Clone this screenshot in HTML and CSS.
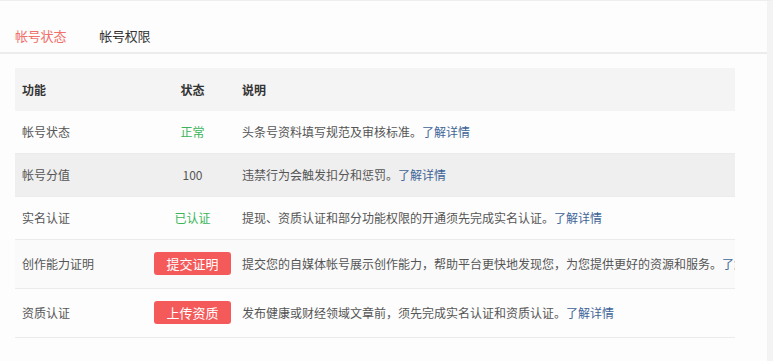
FILE: index.html
```html
<!DOCTYPE html>
<html>

<head>
    <title>帐号状态</title>
    <link rel="stylesheet" href="styles.css">
</head>

<body>
    <div class="page">
        <div class="main">
            <div class="tabs">
                <span class="tab active">帐号状态</span>
                <span class="tab">帐号权限</span>
            </div>
            <div class="table-wrap">
                <table class="status-table">
                    <thead>
                        <tr>
                            <th class="col-name">功能</th>
                            <th class="col-state">状态</th>
                            <th class="col-desc">说明</th>
                        </tr>
                    </thead>
                    <tbody>
                        <tr>
                            <td>帐号状态</td>
                            <td class="col-state"><span class="ok">正常</span></td>
                            <td>头条号资料填写规范及审核标准。<a href="#">了解详情</a></td>
                        </tr>
                        <tr class="hover">
                            <td>帐号分值</td>
                            <td class="col-state">100</td>
                            <td>违禁行为会触发扣分和惩罚。<a href="#">了解详情</a></td>
                        </tr>
                        <tr>
                            <td>实名认证</td>
                            <td class="col-state"><span class="ok">已认证</span></td>
                            <td>提现、资质认证和部分功能权限的开通须先完成实名认证。<a href="#">了解详情</a></td>
                        </tr>
                        <tr class="light">
                            <td>创作能力证明</td>
                            <td class="col-state"><button class="btn">提交证明</button></td>
                            <td>提交您的自媒体帐号展示创作能力，帮助平台更快地发现您，为您提供更好的资源和服务。<a href="#">了解详情</a></td>
                        </tr>
                        <tr>
                            <td>资质认证</td>
                            <td class="col-state"><button class="btn">上传资质</button></td>
                            <td>发布健康或财经领域文章前，须先完成实名认证和资质认证。<a href="#">了解详情</a></td>
                        </tr>
                    </tbody>
                </table>
            </div>
        </div>
        <div class="side"></div>
    </div>
</body>

</html>
```

FILE: styles.css
```css
html,
body {
    margin: 0;
    padding: 0;
    background-color: #fdfdfd;
    font-family: "Noto Sans CJK SC", "Microsoft YaHei", sans-serif;
    color: #555;
}

.page {
    display: flex;
    height: 361px;
    border-top: 1px solid #eeeeee;
    box-sizing: border-box;
}

.main {
    width: 767px;
    flex: none;
}

.side {
    flex: 1;
    background-color: #f3f3f3;
}

.tabs {
    display: flex;
    gap: 33px;
    height: 51px;
    padding: 0 15px;
    border-bottom: 2px solid #ececec;
    align-items: center;
    box-sizing: content-box;
}

.tab {
    font-size: 13px;
    line-height: 18px;
    color: #333;
    padding-top: 19px;
    letter-spacing: -0.2px;
}

.tab.active {
    color: #f0706a;
}

.table-wrap {
    width: 720px;
    margin: 14px 0 0 15px;
    overflow: hidden;
}

.status-table {
    width: 720px;
    table-layout: fixed;
    border-collapse: collapse;
    font-size: 12px;
    line-height: 17px;
    white-space: nowrap;
}

.status-table th,
.status-table td {
    padding: 12px 7px 13px;
    text-align: left;
    border-bottom: 1px solid #ebebeb;
}

.status-table thead tr {
    background-color: #f4f4f4;
}

.status-table th {
    color: #333;
    font-weight: bold;
    border-bottom: none;
    padding-top: 13px;
}

.col-name {
    width: 121px;
}

.status-table .col-state {
    width: 85px;
    padding-left: 0;
    padding-right: 0;
    text-align: center;
}

.status-table tr.hover {
    background-color: #efefef;
}

.status-table tr.light {
    background-color: #fafafa;
}

.ok {
    color: #3cb55a;
}

.status-table a {
    color: #3d6497;
    text-decoration: none;
}

.btn {
    width: 77px;
    height: 23px;
    border: none;
    border-radius: 3px;
    background-color: #f55a5a;
    color: #fff;
    font-family: inherit;
    font-size: 13px;
    line-height: 23px;
    padding: 0;
    display: inline-block;
    vertical-align: middle;
}
```
